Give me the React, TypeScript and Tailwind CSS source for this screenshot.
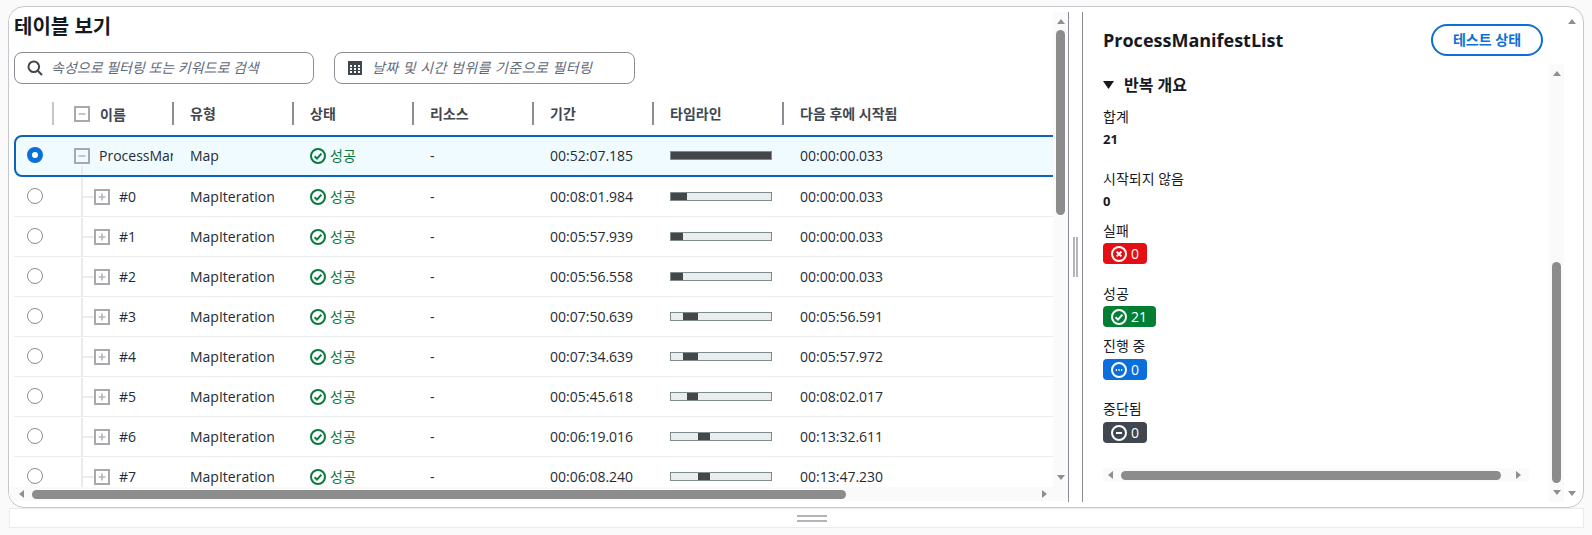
import React from 'react';

const rows = [
  { id: '#0', duration: '00:08:01.984', start: 0, width: 16, after: '00:00:00.033' },
  { id: '#1', duration: '00:05:57.939', start: 0, width: 12, after: '00:00:00.033' },
  { id: '#2', duration: '00:05:56.558', start: 0, width: 12, after: '00:00:00.033' },
  { id: '#3', duration: '00:07:50.639', start: 12, width: 15, after: '00:05:56.591' },
  { id: '#4', duration: '00:07:34.639', start: 12, width: 15, after: '00:05:57.972' },
  { id: '#5', duration: '00:05:45.618', start: 16, width: 11, after: '00:08:02.017' },
  { id: '#6', duration: '00:06:19.016', start: 27, width: 12, after: '00:13:32.611' },
  { id: '#7', duration: '00:06:08.240', start: 27, width: 12, after: '00:13:47.230' },
];

function Arrow({ dir, className = '' }: { dir: 'up' | 'down' | 'left' | 'right'; className?: string }) {
  const points = {
    up: '0,5 4,0 8,5',
    down: '0,0 8,0 4,5',
    left: '5,0 5,8 0,4',
    right: '0,0 5,4 0,8',
  }[dir];
  const vertical = dir === 'up' || dir === 'down';
  return (
    <svg
      width={vertical ? 8 : 5}
      height={vertical ? 5 : 8}
      viewBox={vertical ? '0 0 8 5' : '0 0 5 8'}
      className={`shrink-0 ${className}`}
    >
      <polygon points={points} fill="#8f8f8f" />
    </svg>
  );
}

function StatusIcon({ type, color }: { type: 'check' | 'x' | 'dots' | 'minus'; color: string }) {
  return (
    <svg width="16" height="16" viewBox="0 0 16 16" fill="none" stroke={color} strokeWidth="2" className="shrink-0">
      <circle cx="8" cy="8" r="7" />
      {type === 'check' && <polyline points="4.6,8.2 7,10.6 11.4,5.6" />}
      {type === 'x' && <path d="M5.6 5.6l4.8 4.8M10.4 5.6l-4.8 4.8" />}
      {type === 'dots' && <path d="M4.8 8h1.2M7.4 8h1.2M10 8h1.2" />}
      {type === 'minus' && <path d="M5 8h6" />}
    </svg>
  );
}

function Expander({ open }: { open?: boolean }) {
  return (
    <svg width="16" height="16" viewBox="0 0 16 16" fill="none" className="shrink-0">
      <rect x="1" y="1" width="14" height="14" stroke="#a9a9ad" strokeWidth="2" />
      <path d={open ? 'M4.5 8h7' : 'M4.5 8h7M8 4.5v7'} stroke="#b4b4b8" strokeWidth="1.6" />
    </svg>
  );
}

function Radio({ selected }: { selected?: boolean }) {
  return (
    <div
      className={`w-4 h-4 rounded-full bg-white -mt-[2px] ${
        selected ? 'border-[5px] border-[#0a6fd6]' : 'border border-[#8c8c94]'
      }`}
    />
  );
}

function Timeline({ start, width, full }: { start: number; width: number; full?: boolean }) {
  return (
    <div className="w-[102px] h-[9px] border border-[#7f8c8d] bg-[#eaeded] flex">
      <div className="shrink-0" style={{ width: start }} />
      <div className="bg-[#444647] shrink-0" style={{ width: full ? '100%' : width }} />
    </div>
  );
}

function HeaderCell({ label, width }: { label: string; width: string }) {
  return (
    <div className={`${width} h-[23px] border-l-2 border-[#8c8c94] pl-[16px] flex items-center shrink-0`}>
      {label}
    </div>
  );
}

function Status() {
  return (
    <div className="w-[120px] pl-[17px] flex items-center gap-1 shrink-0 text-[#0b7a3e]">
      <StatusIcon type="check" color="#0b7a3e" />
      <span>성공</span>
    </div>
  );
}

function Badge({ type, color, count, width, className = 'mt-[3px]' }: { type: 'check' | 'x' | 'dots' | 'minus'; color: string; count: number; width: string; className?: string }) {
  return (
    <div className={`${width} ${className} h-[21px] rounded-[4px] pl-2 flex items-center gap-1 text-white text-sm`} style={{ backgroundColor: color }}>
      <StatusIcon type={type} color="#ffffff" />
      <span>{count}</span>
    </div>
  );
}

function LeftPane() {
  return (
    <div className="w-[1060px] shrink-0 border-r border-[#8c8c94] flex flex-col">
      <div className="flex h-[475px]">
        <div className="w-[1044px] overflow-hidden pl-[5px] bg-white">
          <h2 className="h-[30px] flex items-center text-[20px] font-bold text-[#16191f]">테이블 보기</h2>

          {/* Filters */}
          <div className="flex gap-[20px] mt-[10px]">
            <div className="w-[300px] h-8 border border-[#8c8c94] rounded-lg flex items-center pl-[12px] gap-[8px]">
              <svg width="16" height="16" viewBox="0 0 16 16" fill="none" stroke="#414750" strokeWidth="2" className="shrink-0">
                <circle cx="6.8" cy="6.8" r="5.3" />
                <path d="M10.8 10.8L15 15" />
              </svg>
              <input
                readOnly
                placeholder="속성으로 필터링 또는 키워드로 검색"
                className="flex-1 min-w-0 outline-none italic text-sm placeholder:text-[#5f6b7a]"
              />
            </div>
            <div className="w-[301px] h-8 border border-[#8c8c94] rounded-lg flex items-center pl-[13px] gap-[10px]">
              <svg width="14" height="14" viewBox="0 0 14 14" className="shrink-0">
                <rect width="14" height="14" fill="#414750" />
                <path d="M2 4h2v2H2zM6 4h2v2H6zM10 4h2v2h-2zM2 7h2v2H2zM6 7h2v2H6zM10 7h2v2h-2zM2 10h2v2H2zM6 10h2v2H6zM10 10h2v2h-2z" fill="#ffffff" />
              </svg>
              <input
                readOnly
                placeholder="날짜 및 시간 범위를 기준으로 필터링"
                className="flex-1 min-w-0 outline-none italic text-sm tracking-[0.45px] placeholder:text-[#5f6b7a]"
              />
            </div>
          </div>

          {/* Header */}
          <div className="flex mt-[18px] mb-[10px] text-sm font-bold text-[#414750]">
            <div className="w-[38px] shrink-0" />
            <div className="w-[120px] h-[23px] border-l-2 border-[#c6c6cd] pl-[20px] flex items-center gap-[10px] shrink-0">
              <Expander open />
              <span className="mt-[3px]">이름</span>
            </div>
            <HeaderCell label="유형" width="w-[120px]" />
            <HeaderCell label="상태" width="w-[120px]" />
            <HeaderCell label="리소스" width="w-[120px]" />
            <HeaderCell label="기간" width="w-[120px]" />
            <HeaderCell label="타임라인" width="w-[130px]" />
            <HeaderCell label="다음 후에 시작됨" width="w-[200px]" />
          </div>

          {/* Selected row */}
          <div className="w-[1060px] h-[42px] border-2 border-[#0b64b8] rounded-l-lg bg-[#f0fbff] flex items-center text-sm text-[#232b37] pb-[1px]">
            <div className="w-[39px] -ml-[2px] pl-[13px] shrink-0">
              <Radio selected />
            </div>
            <div className="relative w-[120px] pl-[21px] flex items-center gap-[9px] shrink-0 overflow-hidden self-stretch">
              <Expander open />
              <span className="whitespace-nowrap">ProcessManifestList</span>
              <div className="absolute left-[28px] top-[29px] bottom-0 w-[2px] bg-[#e9ebed]" />
            </div>
            <div className="w-[120px] pl-[17px] shrink-0">Map</div>
            <Status />
            <div className="w-[120px] pl-[17px] shrink-0">-</div>
            <div className="w-[120px] pl-[17px] shrink-0">00:52:07.185</div>
            <div className="w-[130px] pl-[17px] shrink-0">
              <Timeline start={0} width={100} full />
            </div>
            <div className="pl-[17px] shrink-0">00:00:00.033</div>
          </div>

          {/* Iterations */}
          {rows.map(row => (
            <div key={row.id} className="w-[1039px] h-10 border-b border-[#e9ebed] flex items-center text-sm text-[#232b37] shrink-0">
              <div className="w-[39px] pl-[13px] shrink-0">
                <Radio />
              </div>
              <div className="w-[120px] pl-[28px] self-stretch flex items-center shrink-0">
                <div className="w-[2px] self-stretch mt-[1px] bg-[#e9ebed]" />
                <div className="w-[11px] h-[2px] bg-[#e9ebed]" />
                <Expander />
                <span className="ml-[9px]">{row.id}</span>
              </div>
              <div className="w-[120px] pl-[17px] shrink-0">MapIteration</div>
              <Status />
              <div className="w-[120px] pl-[17px] shrink-0">-</div>
              <div className="w-[120px] pl-[17px] shrink-0">{row.duration}</div>
              <div className="w-[130px] pl-[17px] shrink-0">
                <Timeline start={row.start} width={row.width} />
              </div>
              <div className="pl-[17px] shrink-0">{row.after}</div>
            </div>
          ))}
        </div>

        {/* Vertical scrollbar */}
        <div className="w-[15px] shrink-0 bg-[#fafafa] flex flex-col items-center pt-[7px]">
          <Arrow dir="up" />
          <div className="w-[9px] h-[185px] mt-[6px] rounded-full bg-[#8c8c8c]" />
          <Arrow dir="down" className="mt-auto mb-[7px]" />
        </div>
      </div>

      {/* Horizontal scrollbar */}
      <div className="h-[14px] bg-[#fafafa] flex items-center pl-[10px] pr-[21px]">
        <Arrow dir="left" />
        <div className="w-[814px] h-[9px] ml-[8px] rounded-full bg-[#8c8c8c]" />
        <Arrow dir="right" className="ml-auto" />
      </div>
    </div>
  );
}

function RightPane() {
  return (
    <div className="flex-1 min-w-0 flex">
      <div className="flex-1 min-w-0 flex flex-col">
        <div className="h-[52px] pt-[12px] pb-[8px] pl-[20px] pr-[21px] flex items-center justify-between shrink-0">
          <h2 className="text-[18px] font-bold text-[#16191f]">ProcessManifestList</h2>
          <button className="w-[112px] h-8 rounded-full border-2 border-[#0a6fd6] text-sm font-bold text-[#0a6fd6]">
            테스트 상태
          </button>
        </div>

        <div className="flex-1 min-h-0 flex">
          <div className="flex-1 min-w-0 pl-[20px] pr-[20px] pt-[10px] text-sm text-[#16191f]">
            <div className="h-[22px] flex items-center gap-[10px] text-base font-bold">
              <svg width="11" height="8" viewBox="0 0 11 8" className="shrink-0">
                <polygon points="0,0 11,0 5.5,8" fill="#16191f" />
              </svg>
              <span>반복 개요</span>
            </div>
            <div className="mt-[11px] leading-5">합계</div>
            <div className="mt-[2px] leading-5 font-bold text-[13px]">21</div>
            <div className="mt-[20px] leading-5">시작되지 않음</div>
            <div className="mt-[2px] leading-5 font-bold text-[13px]">0</div>
            <div className="mt-[10px] leading-5">실패</div>
            <Badge type="x" color="#e40e14" count={0} width="w-[44px]" className="mt-[2px]" />
            <div className="mt-[20px] leading-5">성공</div>
            <Badge type="check" color="#037f33" count={21} width="w-[53px]" className="mt-[2px]" />
            <div className="mt-[9px] leading-5">진행 중</div>
            <Badge type="dots" color="#0a6fdc" count={0} width="w-[44px]" />
            <div className="mt-[19px] leading-5">중단됨</div>
            <Badge type="minus" color="#414750" count={0} width="w-[44px]" />

            {/* Horizontal scrollbar */}
            <div className="h-[14px] mt-[25px] bg-[#fafafa] flex items-center pl-[5px] pr-[8px]">
              <Arrow dir="left" />
              <div className="w-[380px] h-[9px] ml-[8px] rounded-full bg-[#8c8c8c]" />
              <Arrow dir="right" className="ml-auto" />
            </div>
          </div>

          {/* Inner scrollbar */}
          <div className="w-[15px] shrink-0 bg-[#fafafa] flex flex-col items-center pt-[7px]">
            <Arrow dir="up" />
            <div className="w-[9px] h-[221px] mt-[186px] rounded-full bg-[#8c8c8c]" />
            <Arrow dir="down" className="mt-[7px]" />
          </div>
        </div>
      </div>

      {/* Outer scrollbar */}
      <div className="w-[15px] mr-[4px] shrink-0 flex flex-col items-center pt-[7px]">
        <Arrow dir="up" />
        <Arrow dir="down" className="mt-auto mb-[6px]" />
      </div>
    </div>
  );
}

export default function App() {
  return (
    <div className="h-[535px] overflow-hidden bg-[#fafafa] pt-[6px] px-[8px] font-['Open_Sans','Noto_Sans_CJK_KR',sans-serif]">
      <div className="h-[502px] bg-white border border-[#c6c6cd] rounded-2xl py-[5px] flex overflow-hidden">
        <LeftPane />
        <div className="w-[13px] shrink-0 flex items-center justify-center gap-[1px]">
          <div className="w-[2px] h-[40px] bg-[#b4b4b8]" />
          <div className="w-[2px] h-[40px] bg-[#b4b4b8]" />
        </div>
        <div className="w-px shrink-0 bg-[#8c8c94]" />
        <RightPane />
      </div>
      <div className="h-5 ml-px pl-[30px] bg-white border border-[#e9ebed] flex flex-col items-center justify-center gap-[3px]">
        <div className="w-[30px] h-[2px] bg-[#b4b4b8]" />
        <div className="w-[30px] h-[2px] bg-[#b4b4b8]" />
      </div>
    </div>
  );
}
